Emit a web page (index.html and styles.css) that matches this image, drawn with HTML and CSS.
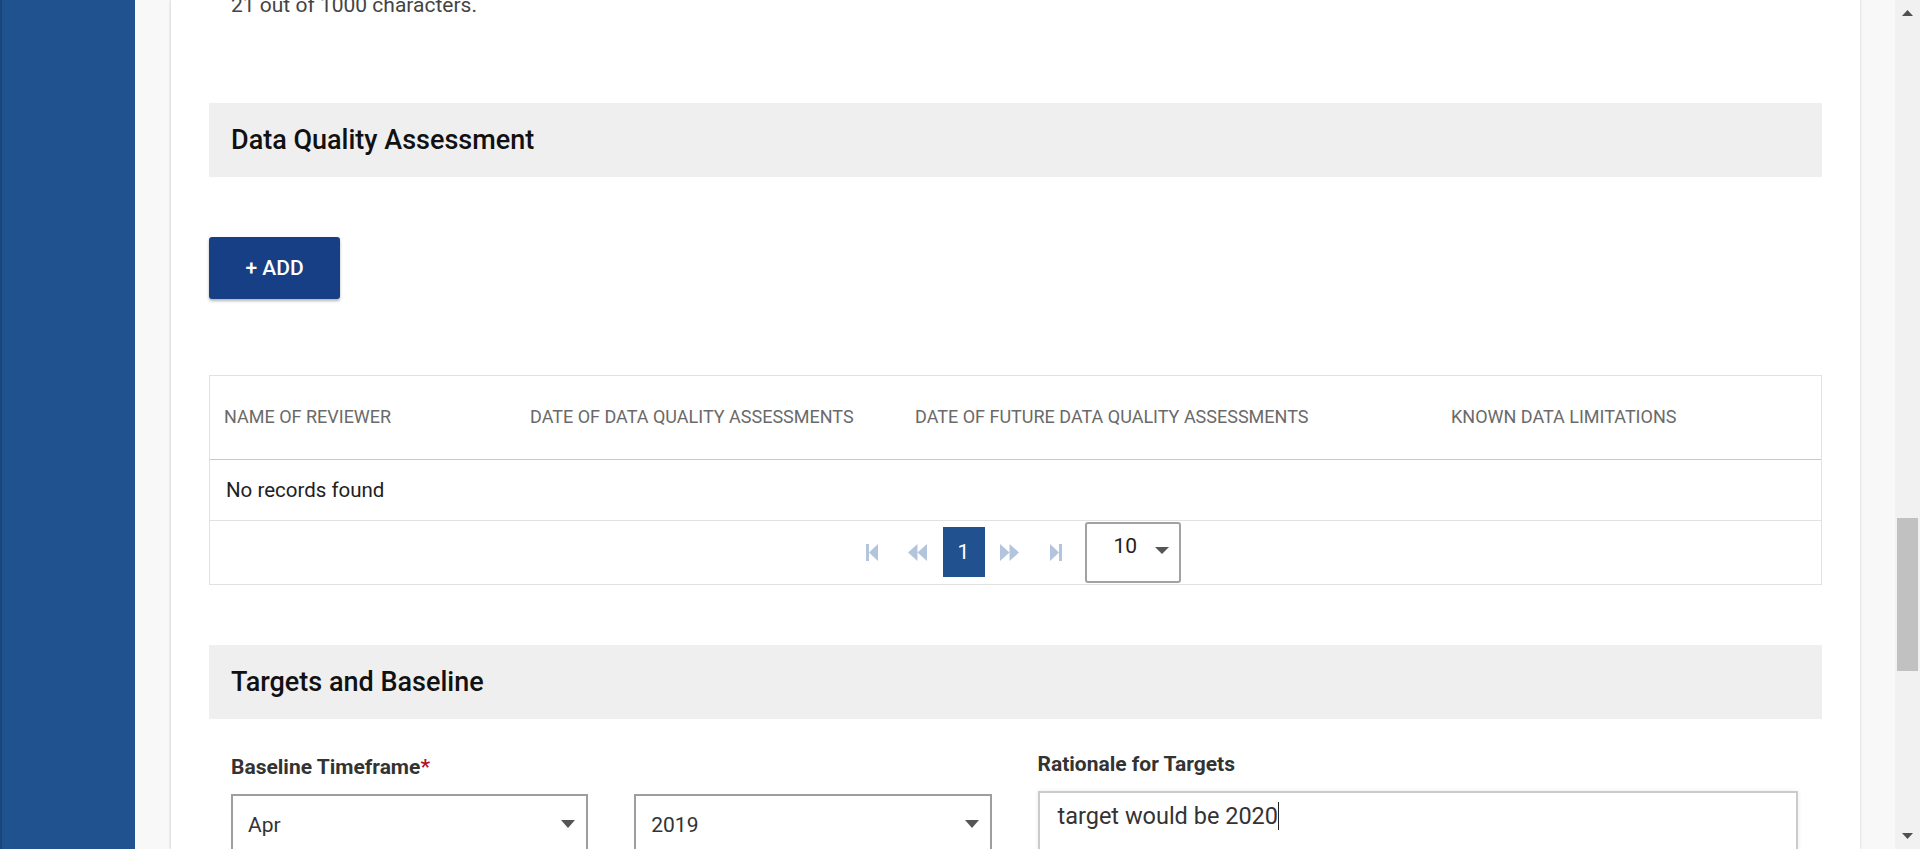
FILE: index.html
```html
<!DOCTYPE html>
<html lang="en">
<head>
<meta charset="utf-8">
<title>Indicator form</title>
<link rel="stylesheet" href="styles.css">
</head>
<body>
<div class="app">
  <aside class="sidebar"></aside>
  <main class="main">
    <div class="card">
      <p class="char-count">21 out of 1000 characters.</p>

      <section class="section section-dqa">
        <h2 class="section-title">Data Quality Assessment</h2>
        <div class="toolbar">
          <button class="btn-add" type="button">+ ADD</button>
        </div>
        <div class="grid">
          <table class="grid-table">
            <colgroup>
              <col class="col-1"><col class="col-2"><col class="col-3"><col class="col-4">
            </colgroup>
            <thead>
              <tr>
                <th>NAME OF REVIEWER</th>
                <th>DATE OF DATA QUALITY ASSESSMENTS</th>
                <th>DATE OF FUTURE DATA QUALITY ASSESSMENTS</th>
                <th>KNOWN DATA LIMITATIONS</th>
              </tr>
            </thead>
            <tbody>
              <tr><td class="empty" colspan="4">No records found</td></tr>
            </tbody>
          </table>
          <div class="pager">
            <span class="pager-btn" aria-label="First page">
              <svg width="12" height="17" viewBox="0 0 12 17"><rect x="0" y="0" width="3" height="17"/><polygon points="3,8.5 12,0 12,17"/></svg>
            </span>
            <span class="pager-btn" aria-label="Previous page">
              <svg width="19" height="17" viewBox="0 0 19 17"><polygon points="0,8.5 9.5,0 9.5,17"/><polygon points="9.5,8.5 19,0 19,17"/></svg>
            </span>
            <span class="pager-num">1</span>
            <span class="pager-btn" aria-label="Next page">
              <svg width="19" height="17" viewBox="0 0 19 17"><polygon points="0,0 9.5,8.5 0,17"/><polygon points="9.5,0 19,8.5 9.5,17"/></svg>
            </span>
            <span class="pager-btn" aria-label="Last page">
              <svg width="12" height="17" viewBox="0 0 12 17"><polygon points="0,0 9,8.5 0,17"/><rect x="9" y="0" width="3" height="17"/></svg>
            </span>
            <span class="pager-size">
              <span class="pager-size-value">10</span>
              <svg class="caret" width="14" height="7" viewBox="0 0 14 7"><polygon points="0,0 14,0 7,7"/></svg>
            </span>
          </div>
        </div>
      </section>

      <section class="section section-targets">
        <h2 class="section-title">Targets and Baseline</h2>
        <div class="form-row">
          <div class="field">
            <label class="field-label">Baseline Timeframe<span class="req">*</span></label>
            <div class="select-pair">
              <div class="select">
                <span class="select-value">Apr</span>
                <svg class="caret" width="14" height="8" viewBox="0 0 14 8"><polygon points="0,0 14,0 7,8"/></svg>
              </div>
              <div class="select">
                <span class="select-value">2019</span>
                <svg class="caret" width="14" height="8" viewBox="0 0 14 8"><polygon points="0,0 14,0 7,8"/></svg>
              </div>
            </div>
          </div>
          <div class="field field-right">
            <label class="field-label">Rationale for Targets</label>
            <div class="textarea">target would be 2020<span class="text-caret"></span></div>
          </div>
        </div>
      </section>
    </div>
  </main>
  <div class="scrollbar">
    <div class="sb-arrow sb-up"><svg width="11" height="6" viewBox="0 0 11 6"><polygon points="5.5,0 11,6 0,6"/></svg></div>
    <div class="sb-track"><div class="sb-thumb"></div></div>
    <div class="sb-arrow sb-down"><svg width="11" height="6" viewBox="0 0 11 6"><polygon points="0,0 11,0 5.5,6"/></svg></div>
  </div>
</div>
</body>
</html>
```
FILE: styles.css
```css
* { box-sizing: border-box; }

html, body {
  margin: 0;
  padding: 0;
  height: 849px;
  overflow: hidden;
  font-family: Roboto, "Liberation Sans", Arial, sans-serif;
  color: #222;
}

.app {
  display: flex;
  height: 849px;
  width: 1920px;
}

.sidebar {
  width: 135px;
  flex: none;
  background: #20528f;
  border-left: 2px solid #18467c;
}

.main {
  flex: 1;
  background: #f8f8f8;
  padding: 0 35px 0 36px;
  overflow: hidden;
}

.card {
  background: #fff;
  height: 100%;
  padding: 0 38px;
  box-shadow: -1px 0 2px rgba(0,0,0,0.12), 1px 0 2px rgba(0,0,0,0.08);
  overflow: hidden;
}

.char-count {
  margin: -7px 0 0 22px;
  font-size: 21px;
  line-height: 24px;
  color: #444;
}

.section-title {
  margin: 0;
  height: 74px;
  display: flex;
  align-items: center;
  padding: 0 22px;
  background: #efefef;
  font-size: 27px;
  font-weight: 500;
  color: #111;
}

.section-dqa { margin-top: 86px; }
.section-targets { margin-top: 60px; }

.toolbar { margin-top: 60px; }

.btn-add {
  width: 131px;
  height: 62px;
  border: 0;
  border-radius: 3px;
  background: #163f85;
  color: #fff;
  font-family: inherit;
  font-size: 21px;
  font-weight: 500;
  box-shadow: 0 2px 3px rgba(0,0,0,0.3);
}

.grid {
  margin-top: 76px;
  border: 1px solid #e2e2e2;
  width: 1613px;
}

.grid-table {
  width: 100%;
  border-collapse: collapse;
  table-layout: fixed;
}

.col-1 { width: 306px; }
.col-2 { width: 385px; }
.col-3 { width: 536px; }

.grid-table th {
  height: 83px;
  text-align: left;
  font-weight: 400;
  font-size: 18px;
  color: #6a6a6a;
  padding: 0 0 2px 14px;
  border-bottom: 1px solid #c8c8c8;
  white-space: nowrap;
}

.grid-table td.empty {
  height: 61px;
  padding: 0 0 0 16px;
  font-size: 20.5px;
  color: #212121;
  border-bottom: 1px solid #e2e2e2;
}

.pager {
  height: 63px;
  display: flex;
  align-items: center;
  justify-content: center;
  gap: 4px;
}

.pager-btn {
  width: 42px;
  height: 50px;
  display: flex;
  align-items: center;
  justify-content: center;
  fill: #b3c5dc;
}

.pager-num {
  width: 42px;
  height: 50px;
  display: flex;
  align-items: center;
  justify-content: center;
  background: #21528f;
  color: #fff;
  font-size: 21px;
}

.pager-size {
  margin-left: 4px;
  width: 96px;
  height: 61px;
  border: 2px solid #a2a2a2;
  border-radius: 3px;
  display: flex;
  align-items: center;
  padding: 0 10px 4px 27px;
  justify-content: space-between;
  font-size: 21px;
  color: #222;
}

.pager-size-value { margin-top: -8px; }
.pager-size .caret { fill: #555; }

.form-row {
  display: grid;
  grid-template-columns: 1fr 1fr;
  column-gap: 46px;
  padding: 0 24px 0 22px;
}

.field { margin-top: 36px; }
.field-right { margin-top: 33px; }

.field-label {
  display: block;
  font-size: 21px;
  line-height: 24px;
  font-weight: 700;
  color: #333;
  margin-bottom: 15px;
}

.req { color: #b3122d; font-weight: 700; }

.select-pair {
  display: grid;
  grid-template-columns: 1fr 1fr;
  column-gap: 46px;
}

.select {
  height: 70px;
  border: 2px solid #9e9e9e;
  display: flex;
  align-items: center;
  justify-content: space-between;
  padding: 0 11px 7px 15px;
  font-size: 21px;
  color: #333;
}

.select .caret { fill: #555; margin-top: -3px; }

.textarea {
  height: 130px;
  border: 2px solid #cbcbcb;
  box-shadow: 0 0 5px rgba(0,0,0,0.08);
  padding: 9px 18px;
  font-size: 23.5px;
  line-height: 28px;
  color: #333;
}

.text-caret {
  display: inline-block;
  width: 1px;
  height: 28px;
  background: #222;
  vertical-align: top;
}

.scrollbar {
  width: 25px;
  flex: none;
  background: #f1f1f1;
  display: flex;
  flex-direction: column;
}

.sb-arrow {
  height: 26px;
  display: flex;
  align-items: center;
  justify-content: center;
  fill: #505050;
}

.sb-track {
  flex: 1;
  padding: 492px 2px 0 2px;
}

.sb-thumb {
  height: 153px;
  background: #c1c1c1;
}
```
